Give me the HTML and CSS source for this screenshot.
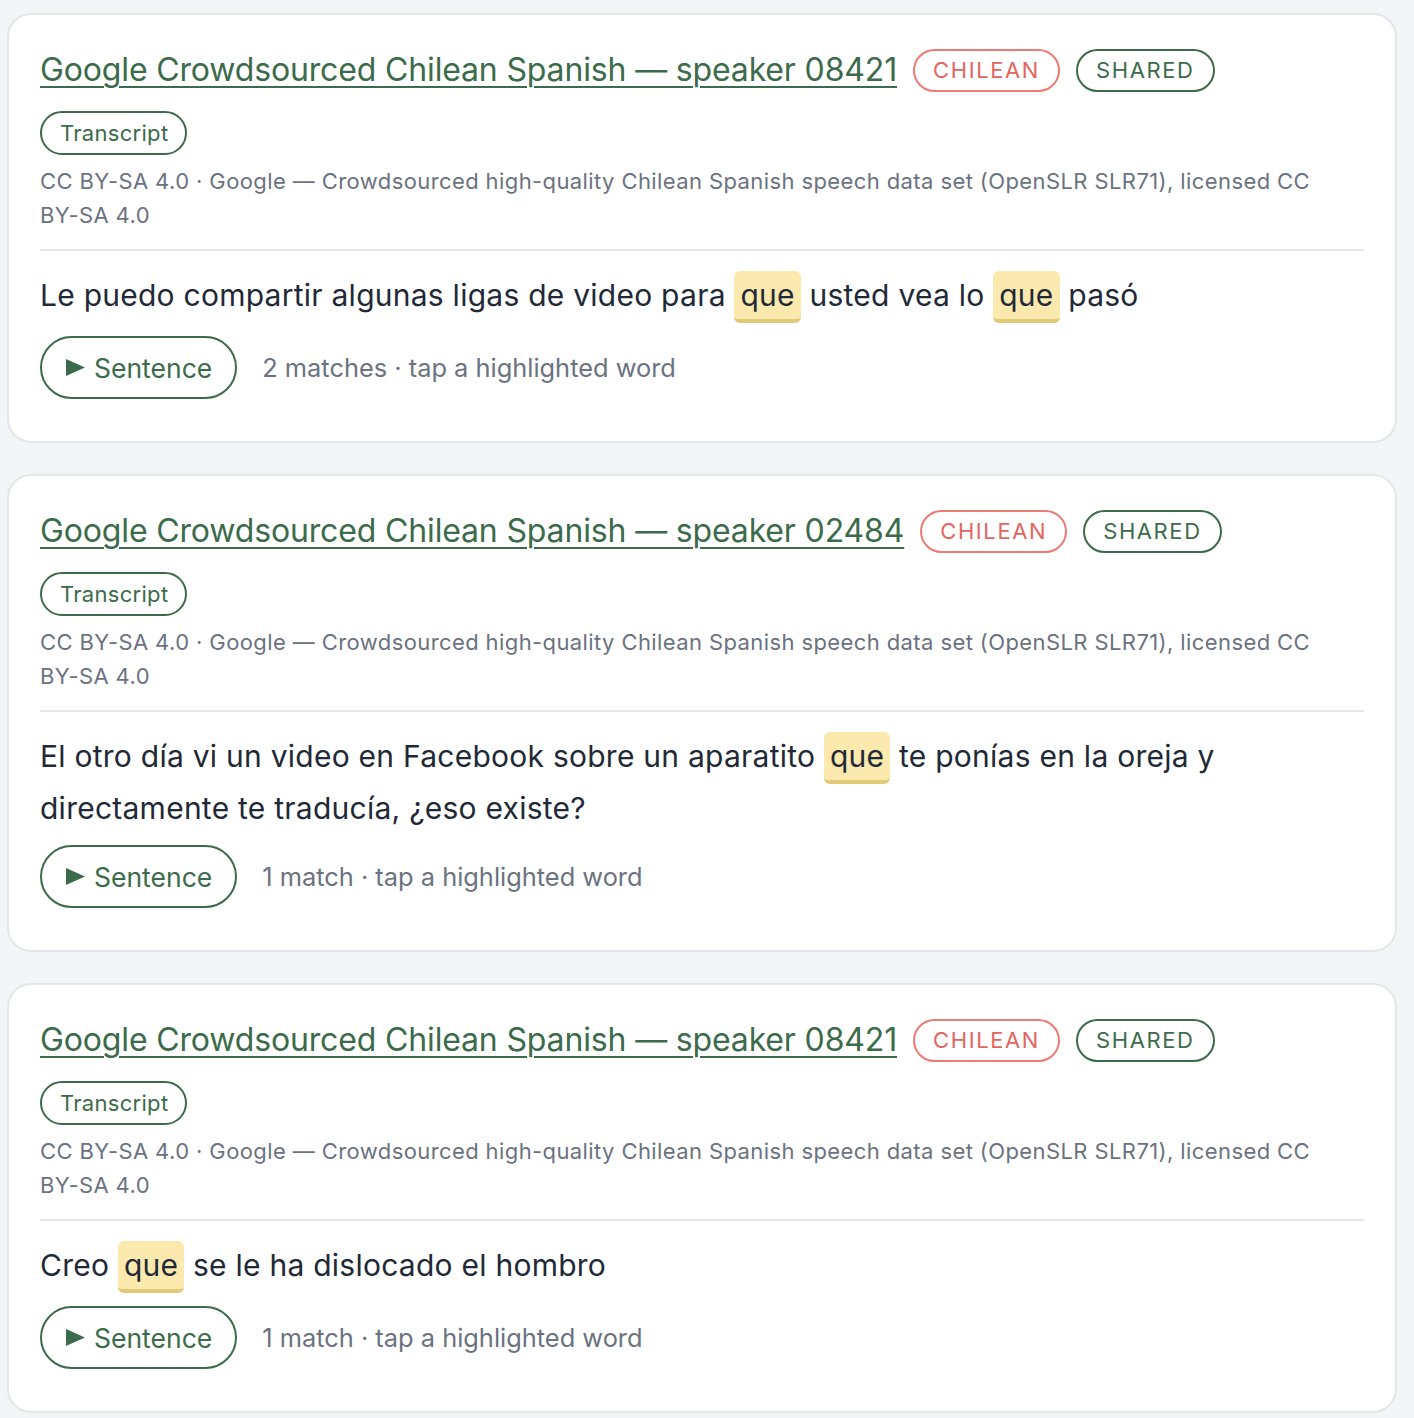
FILE: index.html
```html
<!DOCTYPE html>
<html lang="es">
<head>
<meta charset="utf-8">
<title>Resultados</title>
<link rel="stylesheet" href="styles.css">
</head>
<body>
<main class="results">

  <article class="card">
    <header class="card-head">
      <a class="card-title" href="#">Google Crowdsourced Chilean Spanish — speaker 08421</a>
      <span class="tag tag-accent">CHILEAN</span>
      <span class="tag">SHARED</span>
    </header>
    <span class="pill">Transcript</span>
    <p class="meta">CC BY-SA 4.0 · Google — Crowdsourced high-quality Chilean Spanish speech data set (OpenSLR SLR71), licensed CC <span class="nowrap">BY-SA 4.0</span></p>
    <hr class="rule">
    <p class="sentence">Le puedo compartir algunas ligas de video para <mark class="hit">que</mark> usted vea lo <mark class="hit">que</mark> pasó</p>
    <div class="actions">
      <button class="play" type="button"><svg class="play-icon" viewBox="0 0 19 17" aria-hidden="true"><path d="M0 0 L19 8.5 L0 17 Z"/></svg>Sentence</button>
      <span class="hint">2 matches · tap a highlighted word</span>
    </div>
  </article>

  <article class="card">
    <header class="card-head">
      <a class="card-title" href="#">Google Crowdsourced Chilean Spanish — speaker 02484</a>
      <span class="tag tag-accent">CHILEAN</span>
      <span class="tag">SHARED</span>
    </header>
    <span class="pill">Transcript</span>
    <p class="meta">CC BY-SA 4.0 · Google — Crowdsourced high-quality Chilean Spanish speech data set (OpenSLR SLR71), licensed CC <span class="nowrap">BY-SA 4.0</span></p>
    <hr class="rule">
    <p class="sentence">El otro día vi un video en Facebook sobre un aparatito <mark class="hit">que</mark> te ponías en la oreja y directamente te traducía, ¿eso existe?</p>
    <div class="actions">
      <button class="play" type="button"><svg class="play-icon" viewBox="0 0 19 17" aria-hidden="true"><path d="M0 0 L19 8.5 L0 17 Z"/></svg>Sentence</button>
      <span class="hint">1 match · tap a highlighted word</span>
    </div>
  </article>

  <article class="card">
    <header class="card-head">
      <a class="card-title" href="#">Google Crowdsourced Chilean Spanish — speaker 08421</a>
      <span class="tag tag-accent">CHILEAN</span>
      <span class="tag">SHARED</span>
    </header>
    <span class="pill">Transcript</span>
    <p class="meta">CC BY-SA 4.0 · Google — Crowdsourced high-quality Chilean Spanish speech data set (OpenSLR SLR71), licensed CC <span class="nowrap">BY-SA 4.0</span></p>
    <hr class="rule">
    <p class="sentence">Creo <mark class="hit">que</mark> se le ha dislocado el hombro</p>
    <div class="actions">
      <button class="play" type="button"><svg class="play-icon" viewBox="0 0 19 17" aria-hidden="true"><path d="M0 0 L19 8.5 L0 17 Z"/></svg>Sentence</button>
      <span class="hint">1 match · tap a highlighted word</span>
    </div>
  </article>

</main>
</body>
</html>
```

FILE: styles.css
```css
* {
  box-sizing: border-box;
}

html, body {
  margin: 0;
  background: #f4f5f7;
}

body {
  font-family: Inter, "Noto Sans", "Liberation Sans", sans-serif;
  color: #1f2937;
  padding: 13px 17px 0 7px;
}

.results {
  display: flex;
  flex-direction: column;
  gap: 31px;
}

.card {
  display: flex;
  flex-direction: column;
  align-items: flex-start;
  background: #ffffff;
  border: 2px solid #e3e6eb;
  border-radius: 24px;
  padding: 33px 31px 42px 31px;
}

.card-head {
  display: flex;
  flex-wrap: wrap;
  align-items: center;
  gap: 16px;
  min-height: 44px;
}

.card-title {
  font-size: 32px;
  line-height: 44px;
  color: #3c6b4c;
  text-decoration: underline;
  text-decoration-thickness: 2px;
  text-underline-offset: 5px;
  letter-spacing: -0.15px;
}

.tag {
  display: inline-flex;
  align-items: center;
  height: 43px;
  padding: 0 18px;
  border: 2px solid #3c6b4c;
  border-radius: 22px;
  color: #3c6b4c;
  font-size: 22px;
  letter-spacing: 1.6px;
}

.tag-accent {
  border-color: #ec7b74;
  color: #e4655f;
}

.pill {
  display: inline-flex;
  align-items: center;
  height: 44px;
  margin-top: 19px;
  padding: 0 17px 0 18px;
  border: 2px solid #3c6b4c;
  border-radius: 22px;
  color: #3c6b4c;
  font-size: 22px;
  letter-spacing: 0.3px;
}

.meta {
  margin: 9px 0 0;
  font-size: 22px;
  line-height: 34px;
  letter-spacing: 0.4px;
  color: #6b7280;
}

.nowrap {
  white-space: nowrap;
}

.rule {
  align-self: stretch;
  margin: 17px 0 0;
  border: 0;
  border-top: 2px solid #e5e7eb;
}

/* sentence lines are 48px; a highlighted word adds its 4px bottom edge */
.sentence {
  margin: 20px 0 0;
  font-size: 30px;
  line-height: 48px;
  letter-spacing: 0.25px;
  color: #1f2937;
}

.hit {
  display: inline-block;
  line-height: 48px;
  padding: 0 6px;
  background: #fbe9ae;
  color: #1f2937;
  border-radius: 6px;
  border-bottom: 4px solid #e2c978;
  vertical-align: baseline;
}

.actions {
  display: flex;
  align-items: center;
  gap: 25px;
  margin-top: 13px;
}

.play {
  display: inline-flex;
  align-items: center;
  gap: 9px;
  height: 63px;
  padding: 0 23px 0 24px;
  border: 2px solid #3c6b4c;
  border-radius: 32px;
  background: #ffffff;
  color: #3c6b4c;
  font-family: inherit;
  font-size: 26.5px;
}

.play-icon {
  width: 19px;
  height: 17px;
  fill: #3c6b4c;
}

.hint {
  font-size: 25.4px;
  color: #6b7280;
}
```
